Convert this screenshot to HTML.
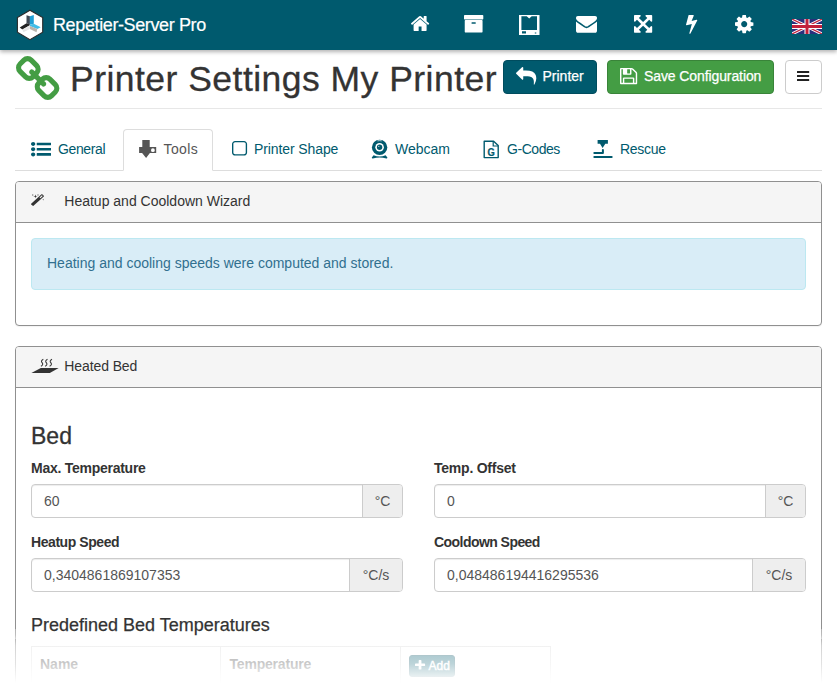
<!DOCTYPE html>
<html lang="en">
<head>
<meta charset="utf-8">
<title>Repetier-Server Pro</title>
<style>
*{box-sizing:border-box;}
html,body{margin:0;padding:0;}
body{width:837px;height:686px;overflow:hidden;background:#fff;position:relative;
  font-family:"Liberation Sans",sans-serif;font-size:14px;color:#333;line-height:20px;}
.abs{position:absolute;white-space:nowrap;}
.ic{position:absolute;overflow:visible;display:block;}
#nav{position:absolute;left:0;top:0;width:837px;height:50px;background:#005a6e;
  box-shadow:0 2px 4px rgba(0,0,0,.3);z-index:5;}
#brand{position:absolute;left:53px;top:15px;font-size:18px;line-height:20px;color:#fff;letter-spacing:-0.38px;white-space:nowrap;-webkit-text-stroke:0.2px #fff;}
#h1{position:absolute;left:70px;top:59px;font-size:35.5px;line-height:40px;font-weight:normal;color:#333;margin:0;letter-spacing:0.47px;white-space:nowrap;-webkit-text-stroke:0.3px #333;}
#hr{position:absolute;left:15px;top:108px;width:807px;height:1px;background:#e7e7e7;}
.btn{position:absolute;top:60px;height:34px;border-radius:4px;color:#fff;font-size:14px;line-height:32px;border:1px solid transparent;white-space:nowrap;}
.btn span{-webkit-text-stroke:0.25px #fff;}
#b1{left:503px;width:94px;background:#005a6e;border-color:#004c5e;}
#b2{left:607px;width:167px;background:#449d44;border-color:#398439;}
#b3{left:785px;width:37px;background:#fff;border-color:#ccc;}
#tabline{position:absolute;left:15px;top:170px;width:807px;height:1px;background:#ddd;}
#tabact{position:absolute;left:123px;top:129px;width:90px;height:42px;border:1px solid #ddd;border-bottom-color:#fff;border-radius:4px 4px 0 0;background:#fff;}
.tab{position:absolute;top:139px;font-size:14px;line-height:20px;color:#005a6e;white-space:nowrap;}
.panel{position:absolute;left:15px;width:807px;border:1px solid #909090;border-radius:4px;background:#fff;box-shadow:0 1px 1px rgba(0,0,0,.05);}
.phead{height:41px;background:#f5f5f5;border-bottom:1px solid #909090;border-radius:3px 3px 0 0;position:relative;}
.phead span{position:absolute;top:9px;font-size:14px;line-height:20px;color:#333;white-space:nowrap;}
#alert{position:absolute;left:31px;top:238px;width:775px;height:52px;background:#d9edf7;border:1px solid #bce8f1;border-radius:4px;color:#31708f;padding:14px 15px 15px 15px;line-height:20px;white-space:nowrap;}
.lbl{position:absolute;font-weight:bold;font-size:14px;line-height:20px;white-space:nowrap;color:#333;}
.ig{position:absolute;height:34px;border:1px solid #ccc;border-radius:4px;background:#fff;box-shadow:inset 0 1px 1px rgba(0,0,0,.075);}
.ig .v{position:absolute;left:12px;top:6px;color:#555;font-size:14px;line-height:20px;white-space:nowrap;}
.ig .ad{position:absolute;right:0;top:0;height:32px;background:#eee;border-left:1px solid #ccc;border-radius:0 3px 3px 0;color:#555;text-align:center;line-height:32px;font-size:14px;}
#tbl{position:absolute;left:31px;top:646px;width:520px;height:60px;border:1px solid #ddd;}
#tbl i{position:absolute;top:0;width:1px;height:60px;background:#ddd;}
#tbl b{position:absolute;top:7px;font-size:14px;line-height:20px;color:#333;white-space:nowrap;}
#add{position:absolute;left:409px;top:655px;width:46px;height:22px;border-radius:3px;background:#005a6e;border:1px solid #004c5e;color:#fff;font-size:12px;line-height:20px;-webkit-text-stroke:0.4px #fff;}
#fade{position:absolute;left:0;top:626px;width:837px;height:60px;background:linear-gradient(to bottom,rgba(255,255,255,0) 0%,rgba(255,255,255,0) 15%,rgba(255,255,255,.35) 22%,rgba(255,255,255,.6) 33%,rgba(255,255,255,.69) 50%,rgba(255,255,255,.74) 63%,rgba(255,255,255,.88) 80%,rgba(255,255,255,1) 95%);z-index:9;}
.bs{position:absolute;top:629px;width:1px;height:10px;background:linear-gradient(to bottom,rgba(255,255,255,.3),rgba(255,255,255,.45));z-index:9;}
</style>
</head>
<body>

<div id="nav">
  <div id="brand">Repetier-Server Pro</div>
  <svg class="ic" style="left:15px;top:8px;width:30px;height:34px" viewBox="0 0 30 34"><polygon points="14.95,2.2 27.7,9.5 27.7,24.3 14.95,31.7 2.4,24.3 2.4,9.5" fill="#fff" stroke="#2a2a2a" stroke-width="1.1"/><polygon points="11.5,7.2 14.9,8.3 14.9,16.6 11.5,15.2" fill="#414a55"/><polygon points="14.9,8.3 18.8,6.9 18.8,15.8 14.9,16.8" fill="#1f9fd6"/><polygon points="11.5,15.2 14.9,16.6 14.9,17.3 7.4,21.4 4.7,19.6" fill="#222"/><polygon points="14.9,16.8 18.8,15.8 25.7,19.3 22.3,20.9 14.9,18.1" fill="#41bde8"/><polygon points="14.9,18.1 22.3,20.9 21.5,24.3 14.9,20.9" fill="#b9b4ad"/><polygon points="7.4,21.4 14.9,17.3 14.9,20.9 8.4,24.3" fill="#e6e6e6"/></svg><svg class="ic" style="left:410.80px;top:16.00px;width:18.20px;height:15.00px" viewBox="25.9 253.0 1612.2 1283.0" preserveAspectRatio="none"><path fill="#fff"  d="M1408 992v480q0 26-19 45t-45 19h-384v-384h-256v384h-384q-26 0-45-19t-19-45v-480q0-1 .5-3t.5-3l575-474 575 474q1 2 1 6zm223-69l-62 74q-8 9-21 11h-3q-13 0-21-7l-692-577-692 577q-12 8-24 7-13-2-21-11l-62-74q-8-10-7-23.500t11-21.500l719-599q32-26 76-26t76 26l244 204v-195q0-14 9-23t23-9h192q14 0 23 9t9 23v408l219 182q10 8 11 21.500t-7 23.500z"/></svg><svg class="ic" style="left:464.30px;top:15.20px;width:19.30px;height:17.50px" viewBox="64.0 128.0 1664.0 1536.0" preserveAspectRatio="none"><path fill="#fff"  d="M1088 832q0-26-19-45t-45-19h-256q-26 0-45 19t-19 45 19 45 45 19h256q26 0 45-19t19-45zm576-192v960q0 26-19 45t-45 19h-1408q-26 0-45-19t-19-45v-960q0-26 19-45t45-19h1408q26 0 45 19t19 45zm64-448v256q0 26-19 45t-45 19h-1536q-26 0-45-19t-19-45v-256q0-26 19-45t45-19h1536q26 0 45 19t19 45z"/></svg><svg class="ic" style="left:519px;top:15px;width:20.5px;height:20px" viewBox="0 0 20.5 20"><path fill="#fff" fill-rule="evenodd" d="M0 0H20.5V20H0Z M2.4 1.2V15H18V1.2H12.7L10.2 3.5 7.7 1.2Z M3 16.3H7V18.4H3Z M15.8 17.6H17.3V18.4H15.8Z"/></svg><svg class="ic" style="left:576.00px;top:16.40px;width:21.00px;height:16.70px" viewBox="0.0 256.0 1792.0 1408.0" preserveAspectRatio="none"><path fill="#fff"  d="M1792 710v794q0 66-47 113t-113 47h-1472q-66 0-113-47t-47-113v-794q44 49 101 87 362 246 497 345 57 42 92.500 65.500t94.500 48 110 24.500h2q51 0 110-24.500t94.500-48 92.500-65.500q170-123 498-345 57-39 100-87zm0-294q0 79-49 151t-122 123q-376 261-468 325-10 7-42.500 30.500t-54 38-52 32.500-57.500 27-50 9h-2q-23 0-50-9t-57.500-27-52-32.500-54-38-42.500-30.500q-91-64-262-182.500t-205-142.500q-62-42-117-115.500t-55-136.500q0-78 41.500-130t118.500-52h1472q65 0 112.500 47t47.500 113z"/></svg><svg class="ic" style="left:634.00px;top:15.20px;width:18.20px;height:17.80px" viewBox="128.0 128.0 1536.0 1536.0" preserveAspectRatio="none"><path fill="#fff"  d="M1411 541l-355 355 355 355 144-144q29-31 70-14 39 17 39 59v448q0 26-19 45t-45 19h-448q-42 0-59-40-17-39 14-69l144-144-355-355-355 355 144 144q31 30 14 69-17 40-59 40h-448q-26 0-45-19t-19-45v-448q0-42 40-59 39-17 69 14l144 144 355-355-355-355-144 144q-19 19-45 19-12 0-24-5-40-17-40-59v-448q0-26 19-45t45-19h448q42 0 59 40 17 39-14 69l-144 144 355 355 355-355-144-144q-31-30-14-69 17-40 59-40h448q26 0 45 19t19 45v448q0 42-39 59-13 5-25 5-26 0-45-19z"/></svg><svg class="ic" style="left:686.00px;top:15.20px;width:11.30px;height:18.80px" viewBox="447.9 128.0 896.3 1664.0" preserveAspectRatio="none"><path fill="#fff"  d="M1333 566q18 20 7 44l-540 1157q-13 25-42 25-4 0-14-2-17-5-25.500-19t-4.500-30l197-808-406 101q-4 1-12 1-18 0-31-11-18-15-13-39l201-825q4-14 16-23t28-9h328q19 0 32 12.500t13 29.500q0 8-5 18l-171 463 396-98q8-2 12-2 19 0 34 15z"/></svg><svg class="ic" style="left:735.00px;top:14.60px;width:18.40px;height:18.20px" viewBox="128.0 128.0 1536.0 1536.0" preserveAspectRatio="none"><path fill="#fff"  d="M1152 896q0-106-75-181t-181-75-181 75-75 181 75 181 181 75 181-75 75-181zm512-109v222q0 12-8 23t-20 13l-185 28q-19 54-39 91 35 50 107 138 10 12 10 25t-9 23q-27 37-99 108t-94 71q-12 0-26-9l-138-108q-44 23-91 38-16 136-29 186-7 28-36 28h-222q-14 0-24.500-8.500t-11.500-21.500l-28-184q-49-16-90-37l-141 107q-10 9-25 9-14 0-25-11-126-114-165-168-7-10-7-23 0-12 8-23 15-21 51-66.500t54-70.500q-27-50-41-99l-183-27q-13-2-21-12.500t-8-23.500v-222q0-12 8-23t19-13l186-28q14-46 39-92-40-57-107-138-10-12-10-24 0-10 9-23 26-36 98.500-107.500t94.500-71.500q13 0 26 10l138 107q44-23 91-38 16-136 29-186 7-28 36-28h222q14 0 24.500 8.500t11.500 21.500l28 184q49 16 90 37l142-107q9-9 24-9 13 0 25 10 129 119 165 170 7 8 7 22 0 12-8 23-15 21-51 66.500t-54 70.500q26 50 41 98l183 28q13 2 21 12.500t8 23.500z"/></svg><svg class="ic" style="left:792px;top:19px;width:30px;height:15px" viewBox="0 0 60 30"><clipPath id="fc"><rect width="60" height="30"/></clipPath><g clip-path="url(#fc)"><rect width="60" height="30" fill="#2b307c"/><path d="M0 0L60 30M60 0L0 30" stroke="#fff" stroke-width="6"/><path d="M0 0L60 30M60 0L0 30" stroke="#c2203a" stroke-width="2.4"/><path d="M30 0V30M0 15H60" stroke="#fff" stroke-width="10"/><path d="M30 0V30M0 15H60" stroke="#c2203a" stroke-width="6"/></g></svg>
</div>

<h1 id="h1">Printer Settings My Printer</h1>
<div id="hr"></div>

<div class="btn" id="b1"><span class="abs" style="left:38.5px;top:-1px">Printer</span></div>
<div class="btn" id="b2"><span class="abs" style="left:36px;top:-1px;letter-spacing:-0.1px">Save Configuration</span></div>
<div class="btn" id="b3"></div>

<div id="tabline"></div>
<div id="tabact"></div>
<div class="tab" style="left:58px;letter-spacing:-0.37px">General</div>
<div class="tab" style="left:163.5px;color:#555;letter-spacing:0.4px">Tools</div>
<div class="tab" style="left:254px;letter-spacing:-0.1px">Printer Shape</div>
<div class="tab" style="left:395px">Webcam</div>
<div class="tab" style="left:507px;letter-spacing:-0.45px">G-Codes</div>
<div class="tab" style="left:620px;letter-spacing:-0.3px">Rescue</div>

<div class="panel" style="top:181px;height:145px;">
  <div class="phead"><span style="left:48.3px">Heatup and Cooldown Wizard</span></div>
</div>
<div id="alert">Heating and cooling speeds were computed and stored.</div>

<div class="panel" style="top:346px;height:400px;border-radius:4px 4px 0 0;">
  <div class="phead"><span style="left:48.3px;letter-spacing:-0.1px">Heated Bed</span></div>
</div>

<div class="abs" style="left:31px;top:423px;font-size:23px;line-height:26px;color:#333;-webkit-text-stroke:0.3px #333;">Bed</div>

<div class="lbl" style="left:31px;top:458px;letter-spacing:-0.26px">Max. Temperature</div>
<div class="lbl" style="left:434px;top:458px;letter-spacing:-0.23px">Temp. Offset</div>
<div class="ig" style="left:31px;top:484px;width:372px;"><span class="v">60</span><span class="ad" style="width:40px">°C</span></div>
<div class="ig" style="left:434px;top:484px;width:372px;"><span class="v">0</span><span class="ad" style="width:40px">°C</span></div>

<div class="lbl" style="left:31px;top:532px;letter-spacing:-0.43px">Heatup Speed</div>
<div class="lbl" style="left:434px;top:532px;letter-spacing:-0.55px">Cooldown Speed</div>
<div class="ig" style="left:31px;top:558px;width:372px;"><span class="v">0,3404861869107353</span><span class="ad" style="width:53px">°C/s</span></div>
<div class="ig" style="left:434px;top:558px;width:372px;"><span class="v">0,048486194416295536</span><span class="ad" style="width:53px">°C/s</span></div>

<div class="abs" style="left:31px;top:615px;font-size:18px;line-height:20px;color:#333;-webkit-text-stroke:0.25px #333;">Predefined Bed Temperatures</div>

<div id="tbl"><i style="left:188px"></i><i style="left:368px"></i><b style="left:8px">Name</b><b style="left:197.5px;letter-spacing:-0.2px">Temperature</b></div>
<div id="add"><svg class="ic" style="left:5.00px;top:4.30px;width:10.10px;height:9.60px" viewBox="192.0 128.0 1408.0 1408.0" preserveAspectRatio="none"><path fill="#fff"  d="M1600 736v192q0 40-28 68t-68 28h-416v416q0 40-28 68t-68 28h-192q-40 0-68-28t-28-68v-416h-416q-40 0-68-28t-28-68v-192q0-40 28-68t68-28h416v-416q0-40 28-68t68-28h192q40 0 68 28t28 68v416h416q40 0 68 28t28 68z"/></svg><span class="abs" style="left:18.5px;top:0">Add</span></div>

<svg class="ic" style="left:15.80px;top:55.90px;width:43.40px;height:44.00px" viewBox="80.0 16.0 1632.0 1632.0" preserveAspectRatio="none"><path fill="#449d44"  d="M1520 1216q0-40-28-68l-208-208q-28-28-68-28-42 0-72 32 3 3 19 18.500t21.500 21.500 15 19 13 25.500 3.500 27.500q0 40-28 68t-68 28q-15 0-27.500-3.500t-25.500-13-19-15-21.500-21.500-18.500-19q-33 31-33 73 0 40 28 68l206 207q27 27 68 27 40 0 68-26l147-146q28-28 28-67zm-703-705q0-40-28-68l-206-207q-28-28-68-28-39 0-68 27l-147 146q-28 28-28 67 0 40 28 68l208 208q27 27 68 27 42 0 72-31-3-3-19-18.500t-21.500-21.500-15-19-13-25.500-3.500-27.500q0-40 28-68t68-28q15 0 27.500 3.500t25.500 13 19 15 21.500 21.500 18.500 19q33-31 33-73zm895 705q0 120-85 203l-147 146q-83 83-203 83-121 0-204-85l-206-207q-83-83-83-203 0-123 88-209l-88-88q-86 88-208 88-120 0-204-84l-208-208q-84-84-84-204t85-203l147-146q83-83 203-83 121 0 204 85l206 207q83 83 83 203 0 123-88 209l88 88q86-88 208-88 120 0 204 84l208 208q84 84 84 204z"/></svg><svg class="ic" style="left:515.50px;top:66.80px;width:20.30px;height:17.60px" viewBox="0.0 64.0 1792.0 1600.0" preserveAspectRatio="none"><path fill="#fff"  d="M1792 1120q0 166-127 451-3 7-10.500 24t-13.500 30-13 22q-12 17-28 17-15 0-23.500-10t-8.500-25q0-9 2.500-26.500t2.500-23.500q5-68 5-123 0-101-17.500-181t-48.500-138.500-80-101-105.500-69.500-133-42.500-154-21.500-175.500-6h-224v256q0 26-19 45t-45 19-45-19l-512-512q-19-19-19-45t19-45l512-512q19-19 45-19t45 19 19 45v256h224q713 0 875 403 53 134 53 333z"/></svg><svg class="ic" style="left:619.80px;top:68.20px;width:17.20px;height:16.20px" viewBox="128.0 128.0 1536.0 1536.0" preserveAspectRatio="none"><path fill="#fff"  d="M512 1536h768v-384h-768v384zm896 0h128v-896q0-14-10-38.500t-20-34.500l-281-281q-10-10-34-20t-39-10v416q0 40-28 68t-68 28h-576q-40 0-68-28t-28-68v-416h-128v1280h128v-416q0-40 28-68t68-28h832q40 0 68 28t28 68v416zm-384-928v-320q0-13-9.500-22.500t-22.500-9.500h-192q-13 0-22.500 9.500t-9.500 22.500v320q0 13 9.500 22.500t22.500 9.500h192q13 0 22.500-9.500t9.500-22.500zm640 32v928q0 40-28 68t-68 28h-1344q-40 0-68-28t-28-68v-1344q0-40 28-68t68-28h928q40 0 88 20t76 48l280 280q28 28 48 76t20 88z"/></svg><svg class="ic" style="left:797px;top:71px;width:12px;height:10px" viewBox="0 0 12 10"><rect x="0" y="0" width="12.2" height="2" rx=".3" fill="#222"/><rect x="0" y="4" width="12.2" height="2" rx=".3" fill="#222"/><rect x="0" y="8" width="12.2" height="2" rx=".3" fill="#222"/></svg><svg class="ic" style="left:30.60px;top:142.00px;width:20.00px;height:14.40px" viewBox="0.0 192.0 1792.0 1408.0" preserveAspectRatio="none"><path fill="#005a6e"  d="M384 1408q0 80-56 136t-136 56-136-56-56-136 56-136 136-56 136 56 56 136zm0-512q0 80-56 136t-136 56-136-56-56-136 56-136 136-56 136 56 56 136zm1408 416v192q0 13-9.500 22.500t-22.500 9.500h-1216q-13 0-22.500-9.500t-9.500-22.500v-192q0-13 9.500-22.500t22.500-9.500h1216q13 0 22.500 9.500t9.500 22.500zm-1408-928q0 80-56 136t-136 56-136-56-56-136 56-136 136-56 136 56 56 136zm1408 416v192q0 13-9.500 22.500t-22.500 9.500h-1216q-13 0-22.500-9.500t-9.500-22.500v-192q0-13 9.500-22.500t22.500-9.500h1216q13 0 22.500 9.500t9.500 22.500zm0-512v192q0 13-9.500 22.500t-22.500 9.500h-1216q-13 0-22.500-9.500t-9.500-22.500v-192q0-13 9.500-22.500t22.500-9.500h1216q13 0 22.500 9.500t9.500 22.500z"/></svg><svg class="ic" style="left:139px;top:140px;width:18px;height:19px" viewBox="0 0 18 19"><path fill="#555" fill-rule="evenodd" d="M3.3 0H10.7V7.1H17.2V12.9H10.9L7.1 18.1 3.1 12.9H0.1V7.1H3.3Z M13.9 8.3A1.9 1.9 0 1 0 13.9 12.1A1.9 1.9 0 1 0 13.9 8.3Z"/></svg><svg class="ic" style="left:231.50px;top:141.30px;width:15.10px;height:14.60px" viewBox="192.0 128.0 1408.0 1408.0" preserveAspectRatio="none"><path fill="#005a6e"  d="M1312 256h-832q-66 0-113 47t-47 113v832q0 66 47 113t113 47h832q66 0 113-47t47-113v-832q0-66-47-113t-113-47zm288 160v832q0 119-84.500 203.500t-203.500 84.500h-832q-119 0-203.500-84.500t-84.500-203.500v-832q0-119 84.500-203.500t203.500-84.500h832q119 0 203.500 84.500t84.500 203.500z"/></svg><svg class="ic" style="left:371px;top:139px;width:18px;height:20px" viewBox="0 0 18 20"><circle cx="8.6" cy="8.4" r="7.7" fill="#005a6e"/><circle cx="8.6" cy="8.2" r="4.3" fill="#fff"/><circle cx="8.6" cy="8.2" r="2.7" fill="#005a6e"/><circle cx="7.8" cy="7.3" r="0.6" fill="#cfe3e8"/><path d="M6.5 1.9Q8.6 1.3 10.7 1.9" stroke="#fff" stroke-width="0.7" fill="none"/><path fill="#005a6e" d="M2.6 16.2Q8.6 19 14.6 16.2L16.4 18.6Q16.6 19.6 15.4 19.4Q8.6 17.4 1.8 19.4Q0.6 19.6 0.8 18.6Z"/></svg><svg class="ic" style="left:483px;top:139.9px;width:17px;height:19px" viewBox="0 0 17 19"><path fill="none" stroke="#005a6e" stroke-width="1.4" stroke-linejoin="round" d="M1.2 1.3H10.6L15.2 5.6V17.6H1.2Z"/><path fill="none" stroke="#005a6e" stroke-width="1.2" d="M10.2 1.3V6H15.2"/><text transform="translate(4.5,15.5) scale(0.9,1)" font-family="Liberation Sans,sans-serif" font-weight="bold" font-size="10.4" fill="#005a6e" stroke="#005a6e" stroke-width="0.25">G</text></svg><svg class="ic" style="left:593px;top:140px;width:20px;height:18px" viewBox="0 0 20 18"><path fill="#005a6e" d="M4.6 0H14.9V3.8H12.3L9.6 7.9 7 3.8H4.6Z"/><path fill="none" stroke="#005a6e" stroke-width="2" stroke-linecap="round" stroke-linejoin="round" d="M9.9 10V12.9H1.3"/><path fill="none" stroke="#005a6e" stroke-width="2" stroke-linecap="round" d="M1.3 17H18.7"/></svg><svg class="ic" style="left:30.80px;top:194.10px;width:13.20px;height:12.00px" viewBox="91.0 0.0 1637.0 1637.0" preserveAspectRatio="none"><path fill="#333"  d="M1254 581l293-293-107-107-293 293zm447-293q0 27-18 45l-1286 1286q-18 18-45 18t-45-18l-198-198q-18-18-18-45t18-45l1286-1286q18-18 45-18t45 18l198 198q18 18 18 45zm-1351-190l98 30-98 30-30 98-30-98-98-30 98-30 30-98zm350 162l196 60-196 60-60 196-60-196-196-60 196-60 60-196zm930 478l98 30-98 30-30 98-30-98-98-30 98-30 30-98zm-640-640l98 30-98 30-30 98-30-98-98-30 98-30 30-98z"/></svg><svg class="ic" style="left:31px;top:358px;width:28px;height:16px" viewBox="0 0 28 16"><polygon points="0.4,14.9 18.8,14.9 27.7,10.1 9.8,10.1" fill="#333"/><path fill="none" stroke="#333" stroke-width="1.05" d="M12.3 1.2Q9.4 2.7 11.1 4.7T9.9 8.3 M16.5 1.2Q13.6 2.7 15.3 4.7T14.1 8.3 M21.0 1.2Q18.1 2.7 19.8 4.7T18.6 8.3"/></svg>
<div id="fade"></div><div class="bs" style="left:15px"></div><div class="bs" style="left:821px"></div>
</body>
</html>
